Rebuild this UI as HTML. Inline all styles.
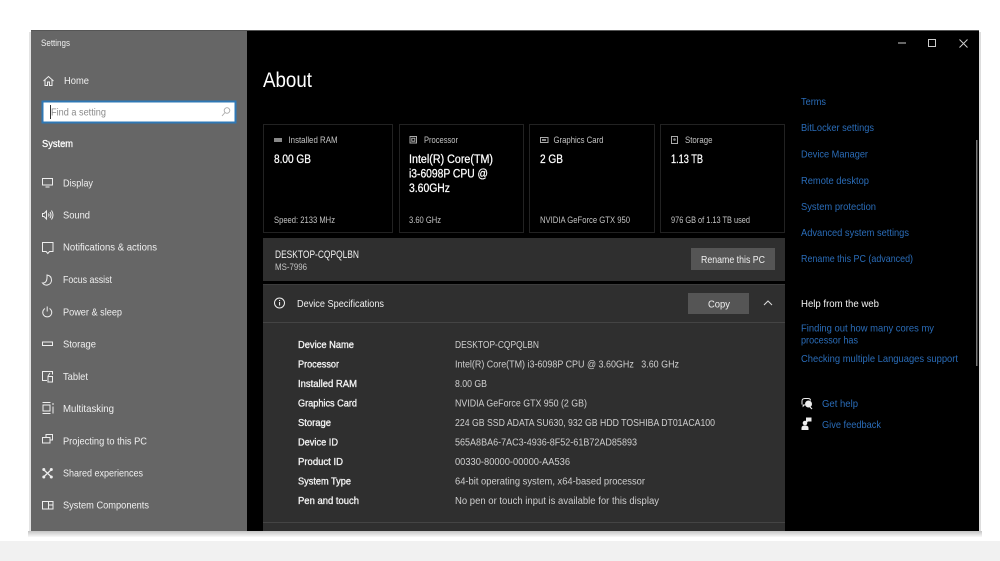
<!DOCTYPE html>
<html><head><meta charset="utf-8"><style>
html,body{margin:0;padding:0;width:1000px;height:561px;overflow:hidden;background:#fff}
svg{display:block;position:absolute;left:0;top:0;filter:blur(.3px)}
text{font-family:"Liberation Sans",sans-serif}
.m{fill:#f0f0f0;font-size:10.500px}
.w{fill:#fff;font-size:10.500px;stroke:#fff;stroke-width:.3px}
.c{fill:#c4c4c4;font-size:9.500px}
.v{fill:#cfcfcf;font-size:10px}
.b{fill:#f4f4f4;font-size:10px;stroke:#f4f4f4;stroke-width:.3px}
.l{fill:#2a6cb8;font-size:10.500px}
.big{fill:#fff;font-size:11.500px;stroke:#fff;stroke-width:.25px}
.i{fill:none;stroke:#eee;stroke-width:1}
.j{fill:none;stroke:#aaa;stroke-width:1}
</style></head><body>
<svg width="1000" height="561" viewBox="0 0 1000 561" xmlns="http://www.w3.org/2000/svg">
<defs><linearGradient id="s" x1="0" y1="0" x2="0" y2="1"><stop offset="0" stop-color="#c4c4c4"/><stop offset="1" stop-color="#fafafa"/></linearGradient></defs>
<rect width="1000" height="561" fill="#fff"/>
<rect y="541" width="1000" height="20" fill="#f1f1f1"/>
<rect x="28" y="531" width="954" height="6" fill="url(#s)"/>
<rect x="979" y="32" width="2" height="499" fill="#ddd"/>
<rect x="29" y="32" width="2" height="499" fill="#e4e4e4"/>
<rect x="31" y="30" width="948" height="501" fill="#000"/>
<rect x="31" y="30" width="948" height="1" fill="#555"/>
<rect x="31" y="31" width="216" height="500" fill="#666"/>

<!-- Sidebar -->
<text x="41" y="46" class="m" style="font-size:9.500px" textLength="29" lengthAdjust="spacingAndGlyphs">Settings</text>
<path class="i" d="M43.500 81l5-4.500 5 4.500M45 80v5.500h2.500v-3.500h2v3.500H52V80"/>
<text x="64" y="84" class="m" textLength="25" lengthAdjust="spacingAndGlyphs">Home</text>

<rect x="42.500" y="101.500" width="193" height="21" fill="#fff" stroke="#2f78b5" stroke-width="2"/>
<rect x="50" y="105" width="1" height="14" fill="#333"/>
<text x="51" y="115.500" fill="#8a8a8a" font-size="10.500" textLength="55" lengthAdjust="spacingAndGlyphs">Find a setting</text>
<circle cx="227" cy="110.500" r="2.800" fill="none" stroke="#aaa" stroke-width=".9"/><path d="M225 112.500l-3 3.500" stroke="#aaa" stroke-width=".9"/>
<text x="42" y="147" class="w" textLength="31" lengthAdjust="spacingAndGlyphs">System</text>

<path class="i" d="M42.500 178.500h10v6.500h-10zM45.500 187h4"/>
<text x="63" y="186.500" class="m" textLength="30" lengthAdjust="spacingAndGlyphs">Display</text>
<path class="i" d="M42.500 213.500h1.500l2.500-2.500v8l-2.500-2.500h-1.500zM48.500 213.500q1 1.500 0 3M50 212q2 3 0 6M51.500 210.500q3 4.500 0 9"/>
<text x="63" y="218.500" class="m" textLength="27" lengthAdjust="spacingAndGlyphs">Sound</text>
<path class="i" d="M42.500 242.500h10.500v9h-3.500l-1.700 2-1.700-2h-3.600z"/>
<text x="63" y="250.500" class="m" textLength="94" lengthAdjust="spacingAndGlyphs">Notifications &amp; actions</text>
<path class="i" d="M47 275q4.500 .5 4.500 5.500a5 5 0 0 1-9 2.500q5 .5 4.500-8z"/>
<text x="63" y="283" class="m" textLength="49" lengthAdjust="spacingAndGlyphs">Focus assist</text>
<path class="i" d="M45 308.500a4.500 4.500 0 1 0 4.500 0M47.200 306.500v5"/>
<text x="63" y="315.500" class="m" textLength="59" lengthAdjust="spacingAndGlyphs">Power &amp; sleep</text>
<rect x="42.500" y="342" width="10" height="3.500" fill="none" stroke="#eee"/>
<text x="63" y="347.500" class="m" textLength="33" lengthAdjust="spacingAndGlyphs">Storage</text>
<path class="i" d="M47 380.500h-4.500v-9h10v3M48 376.500h4.500v5.500h-4.500zM50 373l-2 3"/>
<text x="63" y="380" class="m" textLength="25" lengthAdjust="spacingAndGlyphs">Tablet</text>
<path class="i" d="M42.500 402.500h8M42.500 413.500h8M43 405h7v6h-7zM53 403v2M53 406.500v7"/>
<text x="63" y="412" class="m" textLength="51" lengthAdjust="spacingAndGlyphs">Multitasking</text>
<path class="i" d="M46 437v-2.500h6.500v5.500h-2.500M42.500 437.500h7.500v5.500h-7.500z"/>
<text x="63" y="444.500" class="m" textLength="84" lengthAdjust="spacingAndGlyphs">Projecting to this PC</text>
<path d="M44 470l7 6.500M51 470l-7 6.500" stroke="#eee" stroke-width="1.200"/>
<circle cx="43.800" cy="469.500" r="1.500" fill="#eee"/><circle cx="51.300" cy="469.500" r="1.500" fill="#eee"/><circle cx="43.800" cy="477" r="1.500" fill="#eee"/><circle cx="51.300" cy="477" r="1.500" fill="#eee"/>
<text x="63" y="476.500" class="m" textLength="80" lengthAdjust="spacingAndGlyphs">Shared experiences</text>
<path class="i" d="M42.500 501.500h10.500v7.500h-10.500zM48.500 501.500v7.500M48.500 505h4.500"/>
<text x="63" y="508.500" class="m" textLength="86" lengthAdjust="spacingAndGlyphs">System Components</text>

<!-- Title -->
<text x="263" y="87" fill="#fff" font-size="21" textLength="49" lengthAdjust="spacingAndGlyphs">About</text>

<!-- Cards -->
<g fill="#000" stroke="#222"><rect x="263.500" y="124.500" width="129" height="108"/><rect x="399.500" y="124.500" width="124" height="108"/><rect x="529.500" y="124.500" width="125" height="108"/><rect x="660.500" y="124.500" width="124" height="108"/></g>

<rect x="274" y="138" width="8" height="4" fill="#888"/>
<text x="288.500" y="143" class="c" textLength="49" lengthAdjust="spacingAndGlyphs">Installed RAM</text>
<text x="274" y="163" class="big" textLength="37" lengthAdjust="spacingAndGlyphs">8.00 GB</text>
<text x="274" y="223" class="c" textLength="61" lengthAdjust="spacingAndGlyphs">Speed: 2133 MHz</text>

<path class="j" d="M410 136.500h6.500v6.500h-6.500zM411.800 138.300h3v3h-3z"/>
<text x="424" y="143" class="c" textLength="34" lengthAdjust="spacingAndGlyphs">Processor</text>
<text x="409" y="163" class="big" textLength="84" lengthAdjust="spacingAndGlyphs">Intel(R) Core(TM)</text>
<text x="409" y="177.500" class="big" textLength="79" lengthAdjust="spacingAndGlyphs">i3-6098P CPU @</text>
<text x="409" y="192" class="big" textLength="41" lengthAdjust="spacingAndGlyphs">3.60GHz</text>
<text x="409" y="223" class="c" textLength="32" lengthAdjust="spacingAndGlyphs">3.60 GHz</text>

<path class="j" d="M540.500 137.500h7.500v5h-7.500z"/><rect x="542" y="139" width="4" height="2" fill="#888"/>
<text x="553.500" y="143" class="c" textLength="50" lengthAdjust="spacingAndGlyphs">Graphics Card</text>
<text x="540" y="163" class="big" textLength="23" lengthAdjust="spacingAndGlyphs">2 GB</text>
<text x="540" y="223" class="c" textLength="90" lengthAdjust="spacingAndGlyphs">NVIDIA GeForce GTX 950</text>

<path class="j" d="M671.500 136.500h6v7h-6z"/><circle cx="674.500" cy="139.500" r="1.300" fill="#888"/>
<text x="685" y="143" class="c" textLength="27.500" lengthAdjust="spacingAndGlyphs">Storage</text>
<text x="671" y="163" class="big" textLength="32" lengthAdjust="spacingAndGlyphs">1.13 TB</text>
<text x="671" y="223" class="c" textLength="79" lengthAdjust="spacingAndGlyphs">976 GB of 1.13 TB used</text>

<!-- Name bar -->
<rect x="263" y="238" width="522" height="43" fill="#2f2f2f"/>
<text x="275" y="258" fill="#f0f0f0" font-size="11" textLength="84" lengthAdjust="spacingAndGlyphs">DESKTOP-CQPQLBN</text>
<text x="275" y="270" class="c" textLength="32" lengthAdjust="spacingAndGlyphs">MS-7996</text>
<rect x="691" y="248" width="84" height="22" fill="#555"/>
<text x="701" y="263" fill="#f0f0f0" font-size="10.500" textLength="64" lengthAdjust="spacingAndGlyphs">Rename this PC</text>

<!-- Specs panel -->
<rect x="263" y="284" width="522" height="247" fill="#2f2f2f"/>
<rect x="263" y="284" width="522" height="1" fill="#3c3c3c"/>
<rect x="263" y="322" width="522" height="1" fill="#444"/>
<rect x="263" y="522" width="522" height="1" fill="#444"/>
<circle cx="279.500" cy="303" r="5" fill="none" stroke="#eee"/><rect x="279" y="302" width="1.100" height="3.500" fill="#eee"/><rect x="279" y="300" width="1.100" height="1.100" fill="#eee"/>
<text x="297" y="307" class="m" textLength="87" lengthAdjust="spacingAndGlyphs">Device Specifications</text>
<rect x="688" y="293" width="61" height="21" fill="#555"/>
<text x="708" y="307.500" fill="#f0f0f0" font-size="10.500" textLength="22" lengthAdjust="spacingAndGlyphs">Copy</text>
<path d="M764 305l4-4 4 4" fill="none" stroke="#ddd"/>

<text x="298" y="348" class="b" textLength="56" lengthAdjust="spacingAndGlyphs">Device Name</text>
<text x="455" y="348" class="v" textLength="84" lengthAdjust="spacingAndGlyphs">DESKTOP-CQPQLBN</text>
<text x="298" y="367.500" class="b" textLength="41" lengthAdjust="spacingAndGlyphs">Processor</text>
<text x="455" y="367.500" class="v" textLength="224" lengthAdjust="spacingAndGlyphs">Intel(R) Core(TM) i3-6098P CPU @ 3.60GHz &#160; 3.60 GHz</text>
<text x="298" y="387" class="b" textLength="59" lengthAdjust="spacingAndGlyphs">Installed RAM</text>
<text x="455" y="387" class="v" textLength="32" lengthAdjust="spacingAndGlyphs">8.00 GB</text>
<text x="298" y="406.500" class="b" textLength="59" lengthAdjust="spacingAndGlyphs">Graphics Card</text>
<text x="455" y="406.500" class="v" textLength="132" lengthAdjust="spacingAndGlyphs">NVIDIA GeForce GTX 950 (2 GB)</text>
<text x="298" y="426" class="b" textLength="33" lengthAdjust="spacingAndGlyphs">Storage</text>
<text x="455" y="426" class="v" textLength="260" lengthAdjust="spacingAndGlyphs">224 GB SSD ADATA SU630, 932 GB HDD TOSHIBA DT01ACA100</text>
<text x="298" y="445.500" class="b" textLength="40" lengthAdjust="spacingAndGlyphs">Device ID</text>
<text x="455" y="445.500" class="v" textLength="182" lengthAdjust="spacingAndGlyphs">565A8BA6-7AC3-4936-8F52-61B72AD85893</text>
<text x="298" y="465" class="b" textLength="45" lengthAdjust="spacingAndGlyphs">Product ID</text>
<text x="455" y="465" class="v" textLength="115" lengthAdjust="spacingAndGlyphs">00330-80000-00000-AA536</text>
<text x="298" y="484.500" class="b" textLength="53" lengthAdjust="spacingAndGlyphs">System Type</text>
<text x="455" y="484.500" class="v" textLength="190" lengthAdjust="spacingAndGlyphs">64-bit operating system, x64-based processor</text>
<text x="298" y="504" class="b" textLength="61" lengthAdjust="spacingAndGlyphs">Pen and touch</text>
<text x="455" y="504" class="v" textLength="204" lengthAdjust="spacingAndGlyphs">No pen or touch input is available for this display</text>

<!-- Window controls -->
<rect x="898" y="42.500" width="8" height="1" fill="#ccc"/>
<rect x="928.500" y="39.500" width="7" height="7" fill="none" stroke="#ccc"/>
<path d="M959.500 39.500l8 8M967.500 39.500l-8 8" stroke="#ccc"/>
<rect x="976" y="140" width="1.500" height="226" fill="#777"/>

<!-- Right column -->
<text x="801" y="105" class="l" textLength="25" lengthAdjust="spacingAndGlyphs">Terms</text>
<text x="801" y="131" class="l" textLength="73" lengthAdjust="spacingAndGlyphs">BitLocker settings</text>
<text x="801" y="157.500" class="l" textLength="67" lengthAdjust="spacingAndGlyphs">Device Manager</text>
<text x="801" y="184" class="l" textLength="68" lengthAdjust="spacingAndGlyphs">Remote desktop</text>
<text x="801" y="210" class="l" textLength="75" lengthAdjust="spacingAndGlyphs">System protection</text>
<text x="801" y="236" class="l" textLength="108" lengthAdjust="spacingAndGlyphs">Advanced system settings</text>
<text x="801" y="262" class="l" textLength="112" lengthAdjust="spacingAndGlyphs">Rename this PC (advanced)</text>
<text x="801" y="307" fill="#f2f2f2" font-size="10.500" textLength="78" lengthAdjust="spacingAndGlyphs">Help from the web</text>
<text x="801" y="331.500" class="l" textLength="133" lengthAdjust="spacingAndGlyphs">Finding out how many cores my</text>
<text x="801" y="343.500" class="l" textLength="57" lengthAdjust="spacingAndGlyphs">processor has</text>
<text x="801" y="362" class="l" textLength="157" lengthAdjust="spacingAndGlyphs">Checking multiple Languages support</text>
<path d="M802 404.500v-3.500q0-2.500 3-2.500h3q2.500 0 2.500 2" fill="none" stroke="#eee"/><path d="M803 404.500v2l2-2" fill="#eee" stroke="#eee" stroke-width=".7"/><circle cx="808.500" cy="404" r="3.500" fill="#eee"/><path d="M810 407l2 2" stroke="#eee" stroke-width="1.200"/>
<text x="822" y="407" class="l" textLength="36" lengthAdjust="spacingAndGlyphs">Get help</text>
<circle cx="805" cy="423" r="2.300" fill="#eee"/><path d="M801.500 430v-2q0-2.500 3.500-2.500t3.500 2.500v2z" fill="#eee"/><path d="M806 417.500h5.500v4h-3.500l-1.500 1.200v-1.200h-.5z" fill="#eee"/>
<text x="822" y="428" class="l" textLength="59" lengthAdjust="spacingAndGlyphs">Give feedback</text>
</svg>
</body></html>
